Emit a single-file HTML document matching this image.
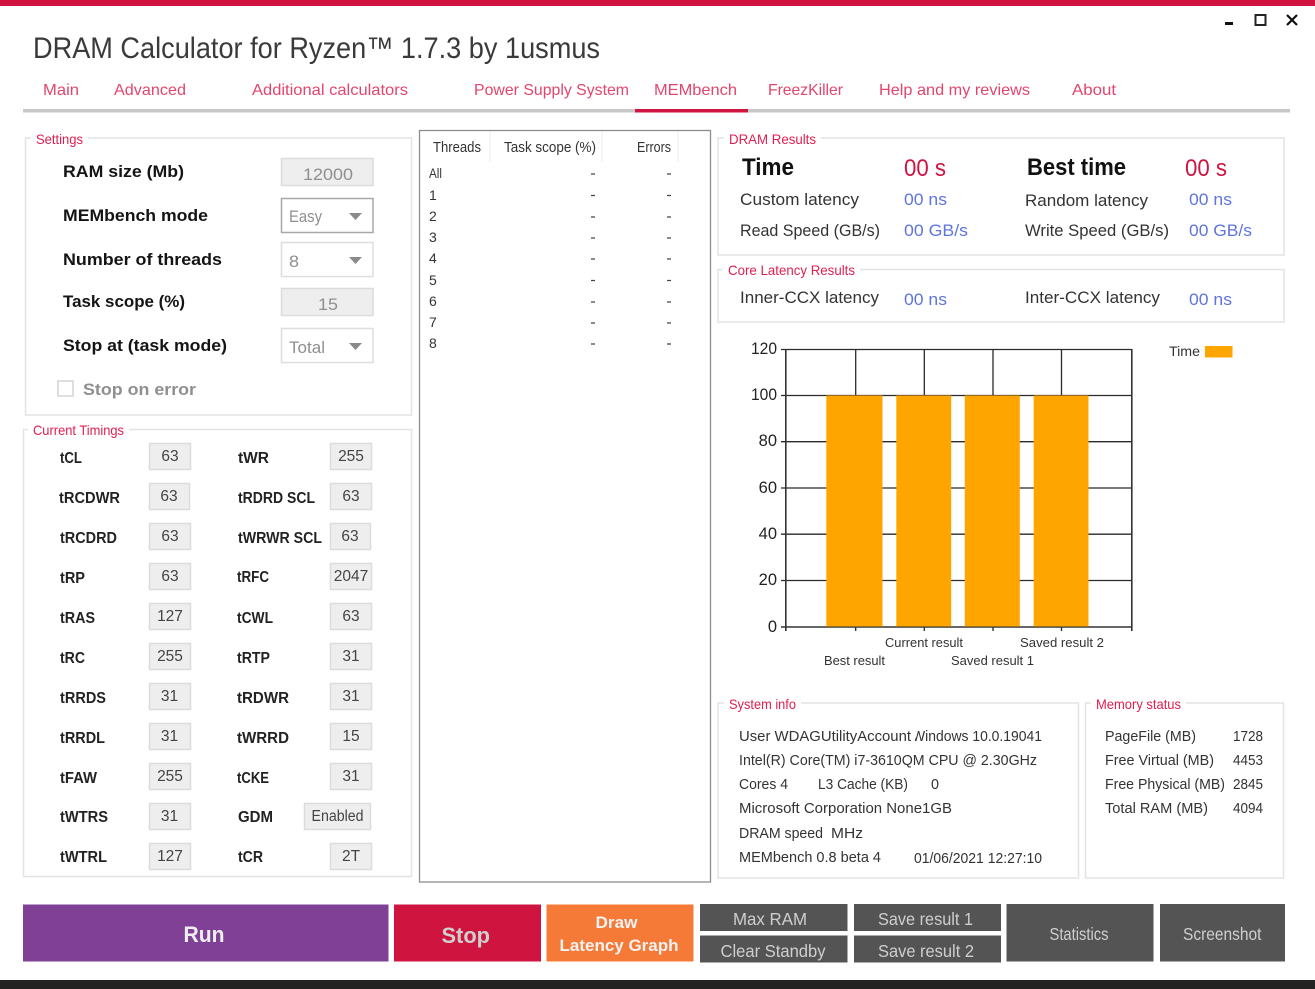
<!DOCTYPE html>
<html><head><meta charset="utf-8"><title>DRAM Calculator for Ryzen</title>
<style>
html,body{margin:0;padding:0;background:#fff;width:1315px;height:989px;overflow:hidden}
svg{display:block;font-family:"Liberation Sans",sans-serif}
.tab{font-size:16px;fill:#e2456d}
.leg{font-size:14px;fill:#e01e50}
.b{font-size:17px;font-weight:bold;fill:#141414}
.tl{font-size:15.5px;font-weight:bold;fill:#222}
.tv{font-size:15.5px;fill:#444;text-anchor:middle}
.in{font-size:17px;fill:#8f8f8f}
.hd{font-size:14.5px;fill:#333}
.row{font-size:14px;fill:#333}
.n{font-size:17px;fill:#333}
.bl{font-size:17px;fill:#5f74dc}
.s{font-size:15px;fill:#333}
.ax{font-size:16.5px;fill:#222;text-anchor:end}
.cx{font-size:13px;fill:#333}
.btn{font-size:17.5px;fill:#cfcfcf}
.box{fill:#fff;stroke:#e3e3e3;stroke-width:1.5}
.ed{fill:#eeeeee;stroke:#dcdcdc;stroke-width:1.5}
.cb{fill:#fff;stroke:#dedede;stroke-width:1.5}
.g{stroke:#2a2a2a;stroke-width:1.3;fill:none}
</style></head><body>
<svg xmlns="http://www.w3.org/2000/svg" width="1315" height="989" viewBox="0 0 1315 989">
<rect width="1315" height="989" fill="#fff"/>
<rect width="1315" height="6" fill="#d01442"/>
<rect x="0" y="980" width="1315" height="9" fill="#222"/>

<!-- window controls -->
<rect x="1225" y="22" width="8" height="3" fill="#111"/>
<rect x="1255.5" y="15" width="10" height="10" fill="none" stroke="#222" stroke-width="2"/>
<path d="M1287 15L1297 25M1297 15L1287 25" stroke="#111" stroke-width="2.2" fill="none"/>

<!-- title -->
<text x="33" y="58" font-size="30" fill="#3a3a3a" textLength="567" lengthAdjust="spacingAndGlyphs">DRAM Calculator for Ryzen™ 1.7.3 by 1usmus</text>

<!-- tabs -->
<text class="tab" x="43" y="95" textLength="36" lengthAdjust="spacingAndGlyphs">Main</text>
<text class="tab" x="114" y="95" textLength="72" lengthAdjust="spacingAndGlyphs">Advanced</text>
<text class="tab" x="252" y="95" textLength="156" lengthAdjust="spacingAndGlyphs">Additional calculators</text>
<text class="tab" x="474" y="95" textLength="155" lengthAdjust="spacingAndGlyphs">Power Supply System</text>
<text class="tab" x="654" y="95" textLength="83" lengthAdjust="spacingAndGlyphs">MEMbench</text>
<text class="tab" x="768" y="95" textLength="75" lengthAdjust="spacingAndGlyphs">FreezKiller</text>
<text class="tab" x="879" y="95" textLength="151" lengthAdjust="spacingAndGlyphs">Help and my reviews</text>
<text class="tab" x="1072" y="95" textLength="44" lengthAdjust="spacingAndGlyphs">About</text>
<rect x="23" y="109" width="1267" height="3.5" fill="#c8c8c8"/>
<rect x="635" y="109" width="113" height="3.5" fill="#d01442"/>

<!-- settings -->
<rect class="box" x="25.5" y="138" width="386" height="277"/>
<rect x="31" y="130" width="57" height="16" fill="#fff"/>
<text class="leg" x="36" y="144" textLength="47" lengthAdjust="spacingAndGlyphs">Settings</text>
<text class="b" x="63" y="177" textLength="121" lengthAdjust="spacingAndGlyphs">RAM size (Mb)</text>
<text class="b" x="63" y="221" textLength="145" lengthAdjust="spacingAndGlyphs">MEMbench mode</text>
<text class="b" x="63" y="265" textLength="159" lengthAdjust="spacingAndGlyphs">Number of threads</text>
<text class="b" x="63" y="307" textLength="122" lengthAdjust="spacingAndGlyphs">Task scope (%)</text>
<text class="b" x="63" y="351" textLength="164" lengthAdjust="spacingAndGlyphs">Stop at (task mode)</text>
<rect x="58" y="381" width="15" height="15" fill="#fff" stroke="#d4d4d4" stroke-width="1.5"/>
<text class="b" x="83" y="395" textLength="113" lengthAdjust="spacingAndGlyphs" style="fill:#8f8f8f">Stop on error</text>

<rect class="ed" x="281.5" y="158.5" width="91.5" height="27"/>
<text class="in" x="303" y="180" textLength="50" lengthAdjust="spacingAndGlyphs">12000</text>
<rect x="281.5" y="198.5" width="91.5" height="34" fill="#fff" stroke="#a8a8a8" stroke-width="1.5"/>
<text class="in" x="289" y="222" textLength="33" lengthAdjust="spacingAndGlyphs">Easy</text>
<path d="M349 213H362L355.5 220Z" fill="#8a8a8a"/>
<rect class="cb" x="281.5" y="242.5" width="91.5" height="34"/>
<text class="in" x="289" y="267" textLength="10" lengthAdjust="spacingAndGlyphs">8</text>
<path d="M349 257H362L355.5 264Z" fill="#8a8a8a"/>
<rect class="ed" x="281.5" y="288.5" width="91.5" height="27"/>
<text class="in" x="318" y="310" textLength="20" lengthAdjust="spacingAndGlyphs">15</text>
<rect class="cb" x="281.5" y="328.5" width="91.5" height="34"/>
<text class="in" x="289" y="353" textLength="36" lengthAdjust="spacingAndGlyphs">Total</text>
<path d="M349 343H362L355.5 350Z" fill="#8a8a8a"/>

<!-- current timings -->
<rect class="box" x="23.5" y="429.5" width="388" height="447"/>
<rect x="28" y="421" width="101" height="16" fill="#fff"/>
<text class="leg" x="33" y="435" textLength="91" lengthAdjust="spacingAndGlyphs">Current Timings</text>

<text class="tl" x="60" y="463" textLength="22" lengthAdjust="spacingAndGlyphs">tCL</text>
<text class="tl" x="59" y="503" textLength="61" lengthAdjust="spacingAndGlyphs">tRCDWR</text>
<text class="tl" x="60" y="543" textLength="57" lengthAdjust="spacingAndGlyphs">tRCDRD</text>
<text class="tl" x="60" y="583" textLength="25" lengthAdjust="spacingAndGlyphs">tRP</text>
<text class="tl" x="60" y="623" textLength="35" lengthAdjust="spacingAndGlyphs">tRAS</text>
<text class="tl" x="60" y="663" textLength="25" lengthAdjust="spacingAndGlyphs">tRC</text>
<text class="tl" x="60" y="703" textLength="46" lengthAdjust="spacingAndGlyphs">tRRDS</text>
<text class="tl" x="60" y="743" textLength="45" lengthAdjust="spacingAndGlyphs">tRRDL</text>
<text class="tl" x="60" y="783" textLength="37" lengthAdjust="spacingAndGlyphs">tFAW</text>
<text class="tl" x="60" y="822" textLength="48" lengthAdjust="spacingAndGlyphs">tWTRS</text>
<text class="tl" x="60" y="862" textLength="47" lengthAdjust="spacingAndGlyphs">tWTRL</text>

<text class="tl" x="238" y="463" textLength="31" lengthAdjust="spacingAndGlyphs">tWR</text>
<text class="tl" x="238" y="503" textLength="77" lengthAdjust="spacingAndGlyphs">tRDRD SCL</text>
<text class="tl" x="238" y="543" textLength="84" lengthAdjust="spacingAndGlyphs">tWRWR SCL</text>
<text class="tl" x="237" y="582" textLength="32" lengthAdjust="spacingAndGlyphs">tRFC</text>
<text class="tl" x="237" y="623" textLength="36" lengthAdjust="spacingAndGlyphs">tCWL</text>
<text class="tl" x="237" y="663" textLength="33" lengthAdjust="spacingAndGlyphs">tRTP</text>
<text class="tl" x="237" y="703" textLength="52" lengthAdjust="spacingAndGlyphs">tRDWR</text>
<text class="tl" x="237" y="743" textLength="52" lengthAdjust="spacingAndGlyphs">tWRRD</text>
<text class="tl" x="237" y="783" textLength="32" lengthAdjust="spacingAndGlyphs">tCKE</text>
<text class="tl" x="238" y="822" textLength="35" lengthAdjust="spacingAndGlyphs">GDM</text>
<text class="tl" x="238" y="862" textLength="25" lengthAdjust="spacingAndGlyphs">tCR</text>

<rect class="ed" x="149.5" y="443.5" width="41" height="26"/><text class="tv" x="170" y="461">63</text>
<rect class="ed" x="149.5" y="483.5" width="40" height="26"/><text class="tv" x="169" y="501">63</text>
<rect class="ed" x="149.5" y="523.5" width="41" height="26"/><text class="tv" x="170" y="541">63</text>
<rect class="ed" x="149.5" y="563.5" width="41" height="26"/><text class="tv" x="170" y="581">63</text>
<rect class="ed" x="149.5" y="603.5" width="41" height="26"/><text class="tv" x="170" y="621">127</text>
<rect class="ed" x="149.5" y="643.5" width="41" height="26"/><text class="tv" x="170" y="661">255</text>
<rect class="ed" x="149.5" y="683.5" width="41" height="26"/><text class="tv" x="169.500" y="701">31</text>
<rect class="ed" x="149.5" y="723.5" width="41" height="26"/><text class="tv" x="169.500" y="741">31</text>
<rect class="ed" x="149.5" y="763.5" width="41" height="26"/><text class="tv" x="170" y="781">255</text>
<rect class="ed" x="149.5" y="803.5" width="41" height="26"/><text class="tv" x="169.500" y="821">31</text>
<rect class="ed" x="149.5" y="843.5" width="41" height="26"/><text class="tv" x="170" y="861">127</text>

<rect class="ed" x="330.5" y="443.5" width="41" height="26"/><text class="tv" x="351" y="461">255</text>
<rect class="ed" x="330.5" y="483.5" width="41" height="26"/><text class="tv" x="351" y="501">63</text>
<rect class="ed" x="330.5" y="523.5" width="40" height="26"/><text class="tv" x="350" y="541">63</text>
<rect class="ed" x="330.5" y="563.5" width="41" height="26"/><text class="tv" x="351" y="581">2047</text>
<rect class="ed" x="330.5" y="603.5" width="41" height="26"/><text class="tv" x="351" y="621">63</text>
<rect class="ed" x="330.5" y="643.5" width="41" height="26"/><text class="tv" x="351" y="661">31</text>
<rect class="ed" x="330.5" y="683.5" width="41" height="26"/><text class="tv" x="351" y="701">31</text>
<rect class="ed" x="330.5" y="723.5" width="41" height="26"/><text class="tv" x="351" y="741">15</text>
<rect class="ed" x="330.5" y="763.5" width="41" height="26"/><text class="tv" x="351" y="781">31</text>
<rect class="ed" x="304.5" y="803.5" width="66" height="26"/><text class="tv" x="337.500" y="821" textLength="52" lengthAdjust="spacingAndGlyphs">Enabled</text>
<rect class="ed" x="330.5" y="843.5" width="41" height="26"/><text class="tv" x="351" y="861">2T</text>

<!-- threads table -->
<rect x="419.500" y="130.500" width="291" height="751.500" fill="#fff" stroke="#8d8d8d" stroke-width="1.300"/>
<path d="M490 131V162M602 131V162M678 131V162" stroke="#ececec" stroke-width="1" fill="none"/>
<text class="hd" x="433" y="152" textLength="48" lengthAdjust="spacingAndGlyphs">Threads</text>
<text class="hd" x="504" y="152" textLength="92" lengthAdjust="spacingAndGlyphs">Task scope (%)</text>
<text class="hd" x="637" y="152" textLength="34" lengthAdjust="spacingAndGlyphs">Errors</text>
<text class="row" x="429" y="178" textLength="13" lengthAdjust="spacingAndGlyphs">All</text>
<text class="row" x="429" y="200">1</text><text class="row" x="429" y="221">2</text><text class="row" x="429" y="242">3</text><text class="row" x="429" y="263">4</text><text class="row" x="429" y="285">5</text><text class="row" x="429" y="306">6</text><text class="row" x="429" y="327">7</text><text class="row" x="429" y="348">8</text>
<path d="M591 174h4M591 195.500h4M591 217h4M591 238h4M591 259h4M591 280.500h4M591 302h4M591 323h4M591 344h4M667 174h4M667 195.500h4M667 217h4M667 238h4M667 259h4M667 280.500h4M667 302h4M667 323h4M667 344h4" stroke="#444" stroke-width="1.200" fill="none"/>

<!-- DRAM results -->
<rect class="box" x="718" y="138" width="566" height="117"/>
<rect x="724" y="130" width="97" height="16" fill="#fff"/>
<text class="leg" x="729" y="144" textLength="87" lengthAdjust="spacingAndGlyphs">DRAM Results</text>
<text x="742" y="175" font-size="24" font-weight="bold" fill="#111" textLength="52" lengthAdjust="spacingAndGlyphs">Time</text>
<text x="904" y="176" font-size="24" fill="#d01442" textLength="42" lengthAdjust="spacingAndGlyphs">00 s</text>
<text x="1027" y="175" font-size="24" font-weight="bold" fill="#111" textLength="99" lengthAdjust="spacingAndGlyphs">Best time</text>
<text x="1185" y="176" font-size="24" fill="#d01442" textLength="42" lengthAdjust="spacingAndGlyphs">00 s</text>
<text class="n" x="740" y="205" textLength="119" lengthAdjust="spacingAndGlyphs">Custom latency</text>
<text class="bl" x="904" y="205" textLength="43" lengthAdjust="spacingAndGlyphs">00 ns</text>
<text class="n" x="1025" y="206" textLength="123" lengthAdjust="spacingAndGlyphs">Random latency</text>
<text class="bl" x="1189" y="205" textLength="43" lengthAdjust="spacingAndGlyphs">00 ns</text>
<text class="n" x="740" y="236" textLength="140" lengthAdjust="spacingAndGlyphs">Read Speed (GB/s)</text>
<text class="bl" x="904" y="236" textLength="64" lengthAdjust="spacingAndGlyphs">00 GB/s</text>
<text class="n" x="1025" y="236" textLength="144" lengthAdjust="spacingAndGlyphs">Write Speed (GB/s)</text>
<text class="bl" x="1189" y="236" textLength="63" lengthAdjust="spacingAndGlyphs">00 GB/s</text>

<!-- core latency -->
<rect class="box" x="718" y="269.500" width="566" height="52.500"/>
<rect x="723" y="261" width="137" height="16" fill="#fff"/>
<text class="leg" x="728" y="275" textLength="127" lengthAdjust="spacingAndGlyphs">Core Latency Results</text>
<text class="n" x="740" y="303" textLength="139" lengthAdjust="spacingAndGlyphs">Inner-CCX latency</text>
<text class="bl" x="904" y="305" textLength="43" lengthAdjust="spacingAndGlyphs">00 ns</text>
<text class="n" x="1025" y="303" textLength="135" lengthAdjust="spacingAndGlyphs">Inter-CCX latency</text>
<text class="bl" x="1189" y="305" textLength="43" lengthAdjust="spacingAndGlyphs">00 ns</text>

<!-- chart -->
<path class="g" d="M781 349.500H1132M781 395.500H1132M781 441.700H1132M781 488H1132M781 534.200H1132M781 580.500H1132"/>
<path class="g" d="M855.700 349V631M924.300 349V631M993 349V631M1061.500 349V631"/>
<path d="M785.800 349V631M1131.800 349V631M781 627H1132" stroke="#333" stroke-width="1.600" fill="none"/>
<rect x="826.300" y="395.500" width="56.200" height="231" fill="#ffa500"/>
<rect x="896.300" y="395.500" width="54.900" height="231" fill="#ffa500"/>
<rect x="964.800" y="395.500" width="55" height="231" fill="#ffa500"/>
<rect x="1033.700" y="395.500" width="54.800" height="231" fill="#ffa500"/>
<text class="ax" x="777" y="354" textLength="26" lengthAdjust="spacingAndGlyphs">120</text>
<text class="ax" x="777" y="400" textLength="26" lengthAdjust="spacingAndGlyphs">100</text>
<text class="ax" x="777" y="446">80</text>
<text class="ax" x="777" y="493">60</text>
<text class="ax" x="777" y="539">40</text>
<text class="ax" x="777" y="585">20</text>
<text class="ax" x="777" y="632">0</text>
<text class="cx" x="885" y="647" textLength="78" lengthAdjust="spacingAndGlyphs">Current result</text>
<text class="cx" x="1020" y="647" textLength="84" lengthAdjust="spacingAndGlyphs">Saved result 2</text>
<text class="cx" x="824" y="665" textLength="61" lengthAdjust="spacingAndGlyphs">Best result</text>
<text class="cx" x="951" y="665" textLength="83" lengthAdjust="spacingAndGlyphs">Saved result 1</text>
<text class="cx" x="1169" y="356" font-size="14" style="font-size:14px" textLength="31" lengthAdjust="spacingAndGlyphs">Time</text>
<rect x="1205" y="346" width="27.500" height="11.500" fill="#ffa500"/>

<!-- system info -->
<rect class="box" x="718" y="703" width="360.500" height="175"/>
<rect x="724" y="695" width="77" height="16" fill="#fff"/>
<text class="leg" x="729" y="709" textLength="67" lengthAdjust="spacingAndGlyphs">System info</text>
<text class="s" x="739" y="741" textLength="172" lengthAdjust="spacingAndGlyphs">User WDAGUtilityAccount</text>
<text class="s" x="912" y="741" textLength="130" lengthAdjust="spacingAndGlyphs">Windows 10.0.19041</text>
<rect x="911" y="727" width="4" height="18" fill="#fff"/>
<text class="s" x="739" y="765" textLength="298" lengthAdjust="spacingAndGlyphs">Intel(R) Core(TM) i7-3610QM CPU @ 2.30GHz</text>
<text class="s" x="739" y="789" textLength="49" lengthAdjust="spacingAndGlyphs">Cores 4</text>
<text class="s" x="818" y="789" textLength="90" lengthAdjust="spacingAndGlyphs">L3 Cache (KB)</text>
<text class="s" x="931" y="789" textLength="8" lengthAdjust="spacingAndGlyphs">0</text>
<text class="s" x="739" y="813" textLength="213" lengthAdjust="spacingAndGlyphs">Microsoft Corporation None1GB</text>
<text class="s" x="739" y="838" textLength="84" lengthAdjust="spacingAndGlyphs">DRAM speed</text>
<text class="s" x="831" y="838" textLength="32" lengthAdjust="spacingAndGlyphs">MHz</text>
<text class="s" x="739" y="862" textLength="142" lengthAdjust="spacingAndGlyphs">MEMbench 0.8 beta 4</text>
<text class="s" x="914" y="863" textLength="128" lengthAdjust="spacingAndGlyphs">01/06/2021 12:27:10</text>

<!-- memory status -->
<rect class="box" x="1085.500" y="703" width="198" height="175"/>
<rect x="1091" y="695" width="95" height="16" fill="#fff"/>
<text class="leg" x="1096" y="709" textLength="85" lengthAdjust="spacingAndGlyphs">Memory status</text>
<text class="s" x="1105" y="741" textLength="91" lengthAdjust="spacingAndGlyphs">PageFile (MB)</text>
<text class="s" x="1233" y="741" textLength="30" lengthAdjust="spacingAndGlyphs">1728</text>
<text class="s" x="1105" y="765" textLength="109" lengthAdjust="spacingAndGlyphs">Free Virtual (MB)</text>
<text class="s" x="1233" y="765" textLength="30" lengthAdjust="spacingAndGlyphs">4453</text>
<text class="s" x="1105" y="789" textLength="120" lengthAdjust="spacingAndGlyphs">Free Physical (MB)</text>
<text class="s" x="1233" y="789" textLength="30" lengthAdjust="spacingAndGlyphs">2845</text>
<text class="s" x="1105" y="813" textLength="103" lengthAdjust="spacingAndGlyphs">Total RAM (MB)</text>
<text class="s" x="1233" y="813" textLength="30" lengthAdjust="spacingAndGlyphs">4094</text>

<!-- buttons -->
<rect x="23" y="904.500" width="365.500" height="57" fill="#7f4095"/>
<text x="183.500" y="942" font-size="22" font-weight="bold" fill="#eee" textLength="41" lengthAdjust="spacingAndGlyphs">Run</text>
<rect x="394" y="904.500" width="147" height="57" fill="#d01440"/>
<text x="441.500" y="943" font-size="22" font-weight="bold" fill="#cfcfcf" textLength="48.500" lengthAdjust="spacingAndGlyphs">Stop</text>
<rect x="546.500" y="904.500" width="147" height="57" fill="#f57a37"/>
<text x="595.500" y="928" font-size="17" font-weight="bold" fill="#f2f2f2" textLength="42" lengthAdjust="spacingAndGlyphs">Draw</text>
<text x="559.500" y="951" font-size="17" font-weight="bold" fill="#f2f2f2" textLength="119" lengthAdjust="spacingAndGlyphs">Latency Graph</text>
<rect x="700" y="904" width="147.500" height="27" fill="#545454"/>
<text class="btn" x="733" y="925" textLength="74" lengthAdjust="spacingAndGlyphs">Max RAM</text>
<rect x="700" y="935.500" width="147.500" height="27" fill="#545454"/>
<text class="btn" x="720.500" y="957" textLength="105" lengthAdjust="spacingAndGlyphs">Clear Standby</text>
<rect x="854" y="904" width="147" height="27" fill="#545454"/>
<text class="btn" x="878" y="925" textLength="95" lengthAdjust="spacingAndGlyphs">Save result 1</text>
<rect x="854" y="935.500" width="147" height="27" fill="#545454"/>
<text class="btn" x="878" y="957" textLength="96" lengthAdjust="spacingAndGlyphs">Save result 2</text>
<rect x="1006.500" y="904" width="147" height="57.500" fill="#545454"/>
<text class="btn" x="1049.500" y="940" textLength="59" lengthAdjust="spacingAndGlyphs">Statistics</text>
<rect x="1160" y="904" width="125" height="57.500" fill="#545454"/>
<text class="btn" x="1183" y="940" textLength="78.500" lengthAdjust="spacingAndGlyphs">Screenshot</text>
</svg>
</body></html>
